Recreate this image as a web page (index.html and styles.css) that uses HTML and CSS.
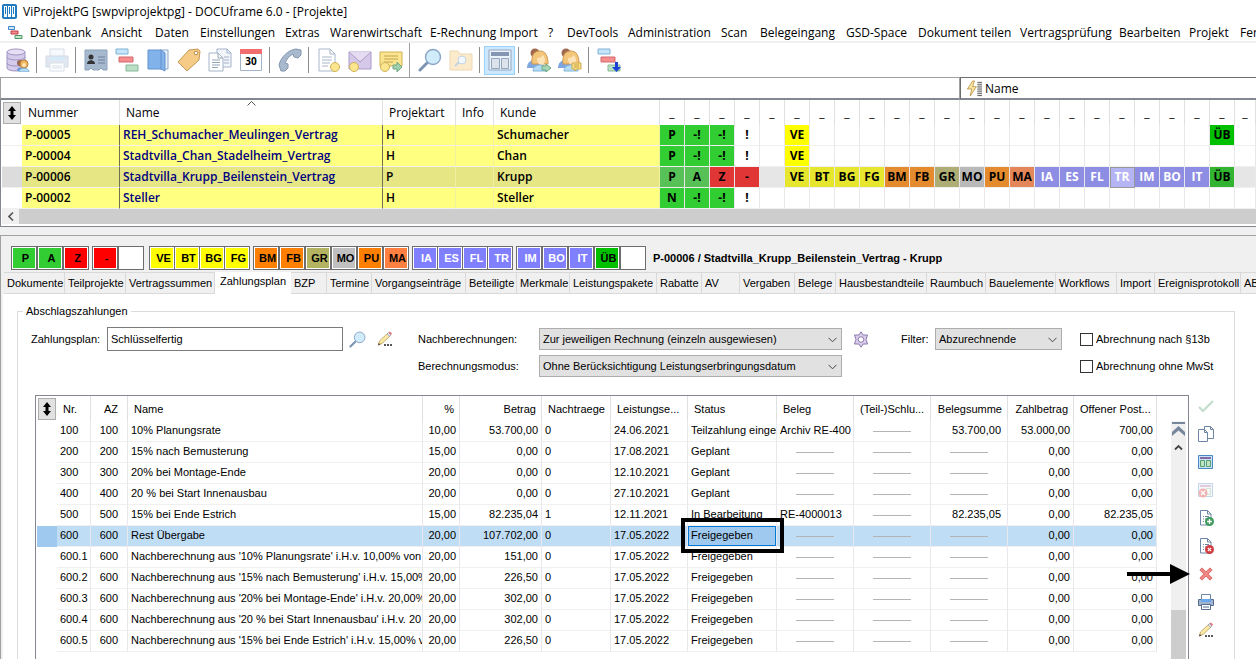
FILE: index.html
```html
<!DOCTYPE html>
<html lang="de">
<head>
  <meta charset="UTF-8" />
  <meta name="viewport" content="width=device-width, initial-scale=1.0"/>
  <title>ViProjektPG [swpviprojektpg] - DOCUframe 6.0 - [Projekte]</title>
  <link rel="stylesheet" href="styles.css">
</head>
<body>

<!-- Shared icon shapes -->
<svg class="defs" width="0" height="0" aria-hidden="true">
  <symbol id="i-gantt" viewBox="0 0 24 24">
    <path d="M1 1h12v5H1z" fill="#c5e6fa" stroke="#7fb2d6"/>
    <path d="M4 9h14v5H4z" fill="#f78d8d" stroke="#cf6a70"/>
    <path d="M11 17h12v6H11z" fill="#b9e0c4" stroke="#86b896"/>
  </symbol>
  <symbol id="i-search" viewBox="0 0 24 24">
    <path d="M2 22l8-8" stroke="#7d94b5" stroke-width="3" stroke-linecap="round"/>
    <circle cx="15" cy="9" r="7.5" fill="#d0ecfb" stroke="#8aa6c6" stroke-width="1.4"/>
  </symbol>
  <symbol id="i-people" viewBox="0 0 24 24">
    <circle cx="8" cy="5" r="4.5" fill="#a0694f"/>
    <path d="M0 20c0-5 3-8 8-8s7 3 7 8z" fill="#7ea6e0"/>
    <path d="M5 16C4 6 8 3 13 3s8 4 8 13z" fill="#f3c67c" stroke="#cf9a50"/>
    <path d="M10 10c4 0 5-2 6-3 1 2 2 3 2 5 0 3-2 5-4 5s-4-3-4-7z" fill="#fde3b8"/>
    <path d="M6 23c0-4 3-6 7-6s7 2 7 6z" fill="#b5dcf5" stroke="#82b4d8"/>
  </symbol>
  <symbol id="i-pencil" viewBox="0 0 16 16">
    <path d="M1.500 13.500l1-3.500L11 2l2.500 2.500L5 12.500z" fill="#fbe9a6" stroke="#b59a55" stroke-width=".8"/>
    <path d="M10 3l1.500-1.500L14 4l-1.500 1.500z" fill="#d5dde8" stroke="#8e9cb0" stroke-width=".6"/>
    <path d="M11.500 1.500L13 .5l2 2L14 4z" fill="#e5727a"/>
    <path d="M.8 14.500l1-2.500 1.700 1.700z" fill="#5a4632"/>
    <path d="M7 14h2M10 14h2M13 14h2" stroke="#222" stroke-width="1.600"/>
  </symbol>
  <symbol id="i-updown" viewBox="0 0 10 16">
    <path d="M5 1l4 5H6.500v4H9l-4 5-4-5h2.500V6H1z" fill="#000"/>
  </symbol>
  <symbol id="i-down" viewBox="0 0 9 6">
    <path d="M.5 .8l4 4 4-4" fill="none" stroke="#444"/>
  </symbol>
</svg>

<div class="app">
  <header class="titlebar">
    <svg width="16" height="16" viewBox="0 0 16 16">
      <rect x="0" y="0" width="15" height="15" rx="2" fill="#1f7bbd"/>
      <path d="M2 2h3v11H2zM6 2h3v11H6zM10 2h3v11h-3z" fill="#fff"/>
      <path d="M3 3h1v7H3zM7 3h1v7H7zM11 3h1v7h-1z" fill="#1f7bbd"/>
    </svg>
    <span>ViProjektPG [swpviprojektpg] - DOCUframe 6.0 - [Projekte]</span>
  </header>

  <nav class="menubar">
    <svg width="15" height="15" viewBox="0 0 15 15">
      <path d="M.5 1.500h6v3h-6z" fill="#cfe8fa" stroke="#3d86c4"/>
      <path d="M3 6h7v3H3z" fill="#f38b8b" stroke="#c23b48"/>
      <path d="M7 10.500h7v3H7z" fill="#c4e6cd" stroke="#4d9563"/>
    </svg>
    <a href="#">Datenbank</a>
    <a href="#">Ansicht</a>
    <a href="#">Daten</a>
    <a href="#">Einstellungen</a>
    <a href="#">Extras</a>
    <a href="#">Warenwirtschaft</a>
    <a href="#">E-Rechnung Import</a>
    <a href="#">?</a>
    <a href="#">DevTools</a>
    <a href="#">Administration</a>
    <a href="#">Scan</a>
    <a href="#">Belegeingang</a>
    <a href="#">GSD-Space</a>
    <a href="#">Dokument teilen</a>
    <a href="#">Vertragsprüfung</a>
    <a href="#">Bearbeiten</a>
    <a href="#">Projekt</a>
    <a href="#">Fenster</a>
  </nav>

  <div class="toolbar">
    <button aria-label="Datenbank"><svg viewBox="0 0 24 24">
      <path d="M1 4v16c0 4 18 4 18 0V4" fill="#d5cbea" stroke="#a195c2"/>
      <ellipse cx="10" cy="4" rx="9" ry="3" fill="#e6def5" stroke="#a195c2"/>
      <path d="M1 9c0 4 18 4 18 0M1 15c0 4 18 4 18 0" fill="none" stroke="#a195c2"/>
      <circle cx="14" cy="15" r="3" fill="#9b6750"/>
      <path d="M11 23c0-5 5-5 6 0z" fill="#6f97d3"/>
      <circle cx="18" cy="16" r="4" fill="#efb65c" stroke="#b98238"/>
      <circle cx="18" cy="17" r="2" fill="#fde3b8"/>
      <path d="M13 24c0-5 10-5 10 0z" fill="#b5dcf5" stroke="#7eaed2"/>
    </svg></button>
    <span class="sep"></span>
    <button aria-label="Drucken"><svg viewBox="0 0 24 24" opacity=".45">
      <path d="M5 1h14v8H5z" fill="#eef3fa" stroke="#a9b9cf"/>
      <path d="M1 8h22v11H1z" fill="#bccbe0" stroke="#9fb1cb"/>
      <path d="M5 9h14v3H5z" fill="#a5d3f5"/>
      <path d="M5 15h14v8H5z" fill="#fff" stroke="#a9b9cf"/>
      <path d="M7 18h10M7 20h10" stroke="#a9b9cf"/>
    </svg></button>
    <span class="sep"></span>
    <button aria-label="Adressen"><svg viewBox="0 0 24 24">
      <path d="M1 2h22v20h-4l-2-2-2 2H9l-2-2-2 2H1z" fill="#a7b9cf" stroke="#8da2bd"/>
      <circle cx="7" cy="9" r="2.500" fill="#333"/>
      <path d="M3 16c0-5 8-5 8 0z" fill="#333"/>
      <path d="M14 9h7M14 12h7M14 15h7" stroke="#6d7f99"/>
    </svg></button>
    <button aria-label="Projekte"><svg><use href="#i-gantt"/></svg></button>
    <button aria-label="Buch"><svg viewBox="0 0 24 24">
      <path d="M14 2h8v19h-8z" fill="#e9f1fa" stroke="#8da7c8"/>
      <path d="M2 2h13l4 3v18l-4-2H2z" fill="#82b2ea" stroke="#6292cd"/>
      <path d="M15 2v19" stroke="#6292cd"/>
    </svg></button>
    <button aria-label="Etikett"><svg viewBox="0 0 24 24">
      <path d="M1 14L12 2l9-1 2 2-1 9-12 11z" fill="#f5cb87" stroke="#c79a55"/>
      <circle cx="19" cy="5" r="1.800" fill="#fff" stroke="#b98d4c"/>
    </svg></button>
    <button aria-label="Dokumente"><svg viewBox="0 0 24 24">
      <path d="M9 1h10l4 4v14H9z" fill="#f2f6fb" stroke="#a3b3c8"/>
      <path d="M19 1v4h4M16 9h5M16 12h5M16 15h5" fill="none" stroke="#a3b3c8"/>
      <path d="M1 5h9l5 5v13H1z" fill="#fff" stroke="#a3b3c8"/>
      <path d="M10 5v5h5M4 12h8M4 14.500h8M4 17h8M4 19.500h6" fill="none" stroke="#93a3b8"/>
    </svg></button>
    <button aria-label="Kalender"><svg viewBox="0 0 24 24">
      <path d="M1.500 1.500h21v21h-21z" fill="#fff" stroke="#a3b3c8"/>
      <path d="M1 1h22v5H1z" fill="#f26d6d"/>
      <text x="12" y="17" text-anchor="middle" class="cal-text">30</text>
    </svg></button>
    <span class="sep"></span>
    <button aria-label="Telefon"><svg viewBox="0 0 24 24">
      <path d="M1 17C3 9 10 2 18 1l5 1v5l-3 3-4-1-1-3c-4 2-6 5-8 9l3 1v4l-3 3H3z" fill="#a9b9cd" stroke="#8497b1"/>
    </svg></button>
    <span class="sep"></span>
    <button aria-label="Neues Dokument"><svg viewBox="0 0 24 24">
      <path d="M2 1h11l5 5v17H2z" fill="#fff" stroke="#a9b7c9"/>
      <path d="M13 1v5h5M5 9h10M5 12h10M5 15h8M5 18h6" fill="none" stroke="#a9b7c9"/>
      <circle cx="18" cy="19" r="4.500" fill="#fbe58f" stroke="#d0b155"/>
    </svg></button>
    <button aria-label="Neue Mail"><svg viewBox="0 0 24 24">
      <path d="M1 4h22v17H1z" fill="#d5c8e8" stroke="#ab9bc8"/>
      <path d="M1 4l11 10L23 4" fill="#e5dcf2" stroke="#ab9bc8"/>
      <circle cx="6" cy="19" r="4.500" fill="#fbe58f" stroke="#d0b155"/>
    </svg></button>
    <button aria-label="Neue Notiz"><svg viewBox="0 0 24 24">
      <path d="M1 4h22v14H1z" fill="#fbe58f" stroke="#d0b155"/>
      <path d="M5 8h14M5 11h14M5 14h9" stroke="#c2a14c"/>
      <circle cx="6" cy="19" r="4.500" fill="#fbe58f" stroke="#d0b155"/>
      <path d="M14 17h4v-3l5 5-5 5v-3h-4z" fill="#9fd0ae" stroke="#74a884"/>
    </svg></button>
    <span class="sep sep-full"></span>
    <button aria-label="Suchen"><svg><use href="#i-search"/></svg></button>
    <button aria-label="Ordner suchen"><svg viewBox="0 0 24 24" opacity=".5">
      <path d="M1 3h8l2 3h12v16H1z" fill="#f9d999" stroke="#ddb068"/>
      <path d="M6 18l4-4" stroke="#8aa6c6" stroke-width="2"/>
      <circle cx="13" cy="12" r="4" fill="#e2f3fd" stroke="#8aa6c6"/>
    </svg></button>
    <span class="sep"></span>
    <button class="active" aria-label="Ansicht"><svg viewBox="0 0 24 24">
      <path d="M1 2h22v20H1z" fill="#eaf2fa" stroke="#93a6bf"/>
      <path d="M3 4h18v4H3z" fill="#8496b1"/>
      <path d="M3.500 10.500h8v10h-8zM13.500 10.500h7v10h-7z" fill="#dde3ea" stroke="#93a6bf"/>
    </svg></button>
    <span class="sep"></span>
    <button aria-label="Personen zuordnen"><svg viewBox="0 0 24 24">
      <use href="#i-people"/>
      <path d="M15 18h4v-2l5 4-5 4v-2h-4z" fill="#a7d8b6" stroke="#6fa780"/>
    </svg></button>
    <button aria-label="Personen Notiz"><svg viewBox="0 0 24 24">
      <use href="#i-people"/>
      <path d="M14 15h9v6h-4l-2 2v-2h-3z" fill="#fbdf82" stroke="#cfa94c"/>
      <path d="M16 17h5M16 19h5" stroke="#b9923a" stroke-width=".8"/>
    </svg></button>
    <span class="sep"></span>
    <button aria-label="Projekt einfügen"><svg viewBox="0 0 24 24">
      <use href="#i-gantt"/>
      <path d="M18 14h3v5h3l-4.500 5L15 19h3z" fill="#1c3fd6"/>
    </svg></button>
  </div>

  <div class="filterbar">
    <input type="text" class="filter-text" aria-label="Suchtext">
    <div class="filter-field">
      <svg width="17" height="17" viewBox="0 0 18 18">
        <path d="M7 1L1.500 9.500H6L4.500 17 11 7H7L9 1z" fill="#fbe3a0" stroke="#b08a3c" stroke-width=".8"/>
        <path d="M12 2.500h5M12 4.500h5M12 6.500h5M12 8.500h5M12 10.500h5M12 12.500h5M12 14.500h5M12 16.500h5" stroke="#555"/>
      </svg>
      <input type="text" value="Name" aria-label="Suchfeld">
    </div>
  </div>

  <!-- Project list -->
  <section class="projects">
    <table class="plist">
      <colgroup>
        <col class="p-head"><col class="p-nr"><col class="p-name"><col class="p-art"><col class="p-info"><col class="p-kunde">
        <col span="23" class="p-st"><col>
      </colgroup>
      <thead>
        <tr>
          <th class="corner"><button class="updown" aria-label="Sortieren"><svg width="10" height="16"><use href="#i-updown"/></svg></button></th>
          <th>Nummer</th>
          <th class="sorted">Name<svg class="caret" width="9" height="5" viewBox="0 0 9 5"><path d="M.5 4.500l4-4 4 4" fill="none" stroke="#555"/></svg></th>
          <th>Projektart</th><th>Info</th><th>Kunde</th>
          <th class="u">_</th><th class="u">_</th><th class="u">_</th><th class="u">_</th><th class="u">_</th><th class="u">_</th><th class="u">_</th><th class="u">_</th>
          <th class="u">_</th><th class="u">_</th><th class="u">_</th><th class="u">_</th><th class="u">_</th><th class="u">_</th><th class="u">_</th><th class="u">_</th>
          <th class="u">_</th><th class="u">_</th><th class="u">_</th><th class="u">_</th><th class="u">_</th><th class="u">_</th><th class="u">_</th><th class="u">_</th>
        </tr>
      </thead>
      <tbody>
        <tr>
          <td></td><td class="y">P-00005</td><td class="y name">REH_Schumacher_Meulingen_Vertrag</td><td class="y">H</td><td class="y"></td><td class="y">Schumacher</td>
          <td class="s green">P</td><td class="s green">-!</td><td class="s green">-!</td><td class="s">!</td><td class="s"></td><td class="s yellow">VE</td>
          <td></td><td></td><td></td><td></td><td></td><td></td><td></td><td></td><td></td><td></td><td></td><td></td><td></td><td></td><td></td><td></td>
          <td class="s ueb">ÜB</td><td></td>
        </tr>
        <tr>
          <td></td><td class="y">P-00004</td><td class="y name">Stadtvilla_Chan_Stadelheim_Vertrag</td><td class="y">H</td><td class="y"></td><td class="y">Chan</td>
          <td class="s green">P</td><td class="s green">-!</td><td class="s green">-!</td><td class="s">!</td><td class="s"></td><td class="s yellow">VE</td>
          <td></td><td></td><td></td><td></td><td></td><td></td><td></td><td></td><td></td><td></td><td></td><td></td><td></td><td></td><td></td><td></td>
          <td></td><td></td>
        </tr>
        <tr class="current">
          <td></td><td class="y">P-00006</td><td class="y name">Stadtvilla_Krupp_Beilenstein_Vertrag</td><td class="y">P</td><td class="y"></td><td class="y">Krupp</td>
          <td class="s green">P</td><td class="s green">A</td><td class="s red">Z</td><td class="s red">-</td><td class="s"></td>
          <td class="s yellow">VE</td><td class="s yellow">BT</td><td class="s yellow">BG</td><td class="s yellow">FG</td>
          <td class="s orange">BM</td><td class="s orange">FB</td><td class="s olive">GR</td><td class="s silver">MO</td><td class="s orange">PU</td><td class="s coral">MA</td>
          <td class="s violet">IA</td><td class="s violet">ES</td><td class="s violet">FL</td><td class="s violet focus">TR</td><td class="s violet">IM</td><td class="s violet">BO</td><td class="s violet">IT</td>
          <td class="s ueb">ÜB</td><td></td>
        </tr>
        <tr>
          <td></td><td class="y">P-00002</td><td class="y name">Steller</td><td class="y">H</td><td class="y"></td><td class="y">Steller</td>
          <td class="s green">N</td><td class="s green">-!</td><td class="s green">-!</td><td class="s">!</td><td class="s"></td><td></td>
          <td></td><td></td><td></td><td></td><td></td><td></td><td></td><td></td><td></td><td></td><td></td><td></td><td></td><td></td><td></td><td></td>
          <td></td><td></td>
        </tr>
      </tbody>
    </table>
    <div class="hscroll">
      <button aria-label="Nach links"><svg width="6" height="9" viewBox="0 0 6 9"><path d="M5 .5l-4 4 4 4" fill="none" stroke="#555" stroke-width="1.600"/></svg></button>
      <div class="hthumb"></div>
    </div>
  </section>

  <!-- Project details -->
  <section class="detail">
    <div class="stages">
      <div class="stage-group">
        <button class="green">P</button><button class="green">A</button><button class="red">Z</button>
      </div>
      <div class="stage-group wide-after">
        <button class="red">-</button><button aria-label="leer"></button>
      </div>
      <div class="stage-group joined">
        <button class="yellow">VE</button><button class="yellow">BT</button><button class="yellow">BG</button><button class="yellow">FG</button>
      </div>
      <div class="stage-group">
        <button class="orange">BM</button><button class="orange">FB</button><button class="olive">GR</button><button class="silver">MO</button><button class="orange">PU</button><button class="coral">MA</button>
      </div>
      <div class="stage-group joined">
        <button class="violet">IA</button><button class="violet">ES</button><button class="violet">FL</button><button class="violet">TR</button>
      </div>
      <div class="stage-group">
        <button class="violet">IM</button><button class="violet">BO</button><button class="violet">IT</button><button class="ueb">ÜB</button><button aria-label="leer"></button>
      </div>
      <strong class="project-title">P-00006 / Stadtvilla_Krupp_Beilenstein_Vertrag - Krupp</strong>
    </div>

    <div class="tabs">
      <button>Dokumente</button>
      <button>Teilprojekte</button>
      <button>Vertragssummen</button>
      <button class="selected">Zahlungsplan</button>
      <button>BZP</button>
      <button>Termine</button>
      <button>Vorgangseinträge</button>
      <button>Beteiligte</button>
      <button>Merkmale</button>
      <button>Leistungspakete</button>
      <button>Rabatte</button>
      <button>AV</button>
      <button>Vergaben</button>
      <button>Belege</button>
      <button>Hausbestandteile</button>
      <button>Raumbuch</button>
      <button>Bauelemente</button>
      <button>Workflows</button>
      <button>Import</button>
      <button>Ereignisprotokoll</button>
      <button>AB</button>
    </div>

    <div class="tab-page">
      <fieldset>
        <legend>Abschlagszahlungen</legend>

        <div class="form">
          <label for="plan">Zahlungsplan:</label>
          <input type="text" id="plan" value="Schlüsselfertig">
          <div class="form-icons">
            <button aria-label="Suchen"><svg width="17" height="17"><use href="#i-search"/></svg></button>
            <button aria-label="Bearbeiten"><svg width="16" height="16"><use href="#i-pencil"/></svg></button>
          </div>
          <label for="nach">Nachberechnungen:</label>
          <div class="select">
            <select id="nach"><option>Zur jeweiligen Rechnung (einzeln ausgewiesen)</option></select>
            <svg width="9" height="6"><use href="#i-down"/></svg>
          </div>
          <div class="form-icons options">
            <button aria-label="Optionen"><svg width="16" height="17" viewBox="0 0 16 17">
              <path d="M8 .8l2.200 3.200h4.300L13 8.500l1.500 4.500h-4.300L8 16.200 5.800 13H1.500L3 8.500 1.500 4h4.300z" fill="#d9cdea" stroke="#8b78ae"/>
              <circle cx="8" cy="8.500" r="2.800" fill="#fff" stroke="#8b78ae"/>
            </svg></button>
          </div>
          <label for="filter">Filter:</label>
          <div class="select">
            <select id="filter"><option>Abzurechnende</option></select>
            <svg width="9" height="6"><use href="#i-down"/></svg>
          </div>
          <label class="check"><input type="checkbox">Abrechnung nach §13b</label>

          <label for="modus" class="second">Berechnungsmodus:</label>
          <div class="select">
            <select id="modus"><option>Ohne Berücksichtigung Leistungserbringungsdatum</option></select>
            <svg width="9" height="6"><use href="#i-down"/></svg>
          </div>
          <label class="check last"><input type="checkbox">Abrechnung ohne MwSt</label>
        </div>

        <div class="plan">
          <div class="grid-frame">
            <table class="grid">
              <colgroup>
                <col class="g-head"><col class="g-nr"><col class="g-az"><col><col class="g-az"><col class="g-betrag"><col class="g-nach">
                <col class="g-beleg"><col class="g-status"><col class="g-beleg"><col class="g-beleg"><col class="g-beleg"><col class="g-zahl"><col class="g-offen">
              </colgroup>
              <thead>
                <tr>
                  <th class="corner"><button class="updown" aria-label="Sortieren"><svg width="10" height="16"><use href="#i-updown"/></svg></button></th>
                  <th>Nr.</th><th class="az">AZ</th><th>Name</th><th class="r">%</th><th class="r">Betrag</th><th>Nachtraege</th><th>Leistungse...</th>
                  <th>Status</th><th>Beleg</th><th>(Teil-)Schlu...</th><th class="r">Belegsumme</th><th class="r">Zahlbetrag</th><th>Offener Post...</th>
                </tr>
              </thead>
              <tbody>
                <tr><td></td><td>100</td><td class="az">100</td><td>10% Planungsrate</td><td class="r">10,00</td><td class="r">53.700,00</td><td>0</td><td>24.06.2021</td><td>Teilzahlung einge</td><td>Archiv RE-400</td><td><hr></td><td class="r sum">53.700,00</td><td class="r">53.000,00</td><td class="r">700,00</td></tr>
                <tr><td></td><td>200</td><td class="az">200</td><td>15% nach Bemusterung</td><td class="r">15,00</td><td class="r">0,00</td><td>0</td><td>17.08.2021</td><td>Geplant</td><td><hr></td><td><hr></td><td><hr></td><td class="r">0,00</td><td class="r">0,00</td></tr>
                <tr><td></td><td>300</td><td class="az">300</td><td>20% bei Montage-Ende</td><td class="r">20,00</td><td class="r">0,00</td><td>0</td><td>12.10.2021</td><td>Geplant</td><td><hr></td><td><hr></td><td><hr></td><td class="r">0,00</td><td class="r">0,00</td></tr>
                <tr><td></td><td>400</td><td class="az">400</td><td>20 % bei Start Innenausbau</td><td class="r">20,00</td><td class="r">0,00</td><td>0</td><td>27.10.2021</td><td>Geplant</td><td><hr></td><td><hr></td><td><hr></td><td class="r">0,00</td><td class="r">0,00</td></tr>
                <tr><td></td><td>500</td><td class="az">500</td><td>15% bei Ende Estrich</td><td class="r">15,00</td><td class="r">82.235,04</td><td>1</td><td>12.11.2021</td><td>In Bearbeitung</td><td>RE-4000013</td><td><hr></td><td class="r sum">82.235,05</td><td class="r">0,00</td><td class="r">82.235,05</td></tr>
                <tr class="current"><td></td><td>600</td><td class="az">600</td><td>Rest Übergabe</td><td class="r">20,00</td><td class="r">107.702,00</td><td>0</td><td>17.05.2022</td><td class="marked"><div>Freigegeben</div></td><td><hr></td><td><hr></td><td><hr></td><td class="r">0,00</td><td class="r">0,00</td></tr>
                <tr><td></td><td>600.1</td><td class="az">600</td><td>Nachberechnung aus '10% Planungsrate' i.H.v. 10,00% von</td><td class="r">20,00</td><td class="r">151,00</td><td>0</td><td>17.05.2022</td><td>Freigegeben</td><td><hr></td><td><hr></td><td><hr></td><td class="r">0,00</td><td class="r">0,00</td></tr>
                <tr><td></td><td>600.2</td><td class="az">600</td><td>Nachberechnung aus '15% nach Bemusterung' i.H.v. 15,00%</td><td class="r">20,00</td><td class="r">226,50</td><td>0</td><td>17.05.2022</td><td>Freigegeben</td><td><hr></td><td><hr></td><td><hr></td><td class="r">0,00</td><td class="r">0,00</td></tr>
                <tr><td></td><td>600.3</td><td class="az">600</td><td>Nachberechnung aus '20% bei Montage-Ende' i.H.v. 20,00%</td><td class="r">20,00</td><td class="r">302,00</td><td>0</td><td>17.05.2022</td><td>Freigegeben</td><td><hr></td><td><hr></td><td><hr></td><td class="r">0,00</td><td class="r">0,00</td></tr>
                <tr><td></td><td>600.4</td><td class="az">600</td><td>Nachberechnung aus '20 % bei Start Innenausbau' i.H.v. 20,</td><td class="r">20,00</td><td class="r">302,00</td><td>0</td><td>17.05.2022</td><td>Freigegeben</td><td><hr></td><td><hr></td><td><hr></td><td class="r">0,00</td><td class="r">0,00</td></tr>
                <tr><td></td><td>600.5</td><td class="az">600</td><td>Nachberechnung aus '15% bei Ende Estrich' i.H.v. 15,00% v</td><td class="r">20,00</td><td class="r">226,50</td><td>0</td><td>17.05.2022</td><td>Freigegeben</td><td><hr></td><td><hr></td><td><hr></td><td class="r">0,00</td><td class="r">0,00</td></tr>
              </tbody>
            </table>
            <div class="vscroll">
              <button aria-label="Zum Anfang"><svg width="15" height="17" viewBox="0 0 15 17"><path d="M1 1h13v2H1zM7.500 5l6.500 6v4L7.500 9.500 1 15v-4z" fill="#76869b"/></svg></button>
              <button class="up" aria-label="Nach oben"><svg width="9" height="7" viewBox="0 0 9 7"><path d="M1 5.500L4.500 2 8 5.500" fill="none" stroke="#444" stroke-width="1.800"/></svg></button>
              <div class="track"></div>
              <div class="vthumb"></div>
            </div>
          </div>

          <div class="actions">
            <button aria-label="Übernehmen"><svg viewBox="0 0 16 16" opacity=".5"><path d="M1 9l4 4L15 3" fill="none" stroke="#86bd97" stroke-width="2.200"/></svg></button>
            <button aria-label="Kopieren"><svg viewBox="0 0 16 16">
              <path d="M6.500 .5h6l3 3v9h-9z" fill="#fff" stroke="#6d86a6"/>
              <path d="M12.500 .5v3h3" fill="none" stroke="#6d86a6"/>
              <path d="M.5 3.500h6l3 3v9h-9z" fill="#fff" stroke="#6d86a6"/>
              <path d="M6.500 3.500v3h3" fill="none" stroke="#6d86a6"/>
            </svg></button>
            <button aria-label="Vorlage"><svg viewBox="0 0 16 16">
              <path d="M.5 1.500h14v13H.5z" fill="#c8e4fa" stroke="#4a86bf"/>
              <path d="M2 3h11v2H2z" fill="#8668a6"/>
              <path d="M2.500 6.500h4v6h-4zM8.500 6.500h4v6h-4z" fill="#bfe3c4" stroke="#57a06a"/>
            </svg></button>
            <button aria-label="Vorlage entfernen"><svg viewBox="0 0 16 16" opacity=".5">
              <path d="M.5 1.500h14v13H.5z" fill="#eaf1f8" stroke="#8bb0d6"/>
              <path d="M2 3h11v2H2z" fill="#c79bb5"/>
              <path d="M8.500 6.500h4v6h-4z" fill="#eef6ee" stroke="#a6c9ac"/>
              <circle cx="5" cy="11" r="4.500" fill="#e56b6b"/>
              <path d="M3 9l4 4M7 9l-4 4" stroke="#fff" stroke-width="1.200"/>
            </svg></button>
            <button aria-label="Position hinzufügen"><svg viewBox="0 0 16 16">
              <path d="M2.500 .5h7l3.500 3.500v11H2.500z" fill="#fff" stroke="#6d86a6"/>
              <path d="M9.500 .5V4H13M5 6.500h1M7 6.500h4M5 9h1M7 9h2M5 11.500h1" fill="none" stroke="#6d86a6"/>
              <circle cx="11.500" cy="11.500" r="4.500" fill="#3f9b5c"/>
              <path d="M11.500 9v5M9 11.500h5" stroke="#fff" stroke-width="1.300"/>
            </svg></button>
            <button aria-label="Position entfernen"><svg viewBox="0 0 16 16">
              <path d="M2.500 .5h7l3.500 3.500v11H2.500z" fill="#fff" stroke="#6d86a6"/>
              <path d="M9.500 .5V4H13M5 6.500h1M7 6.500h4M5 9h1M7 9h2M5 11.500h1" fill="none" stroke="#6d86a6"/>
              <circle cx="11.500" cy="11.500" r="4.500" fill="#cf3b3f"/>
              <path d="M9.800 9.800l3.400 3.400M13.200 9.800l-3.400 3.400" stroke="#fff" stroke-width="1.200"/>
            </svg></button>
            <button class="delete" aria-label="Löschen"><svg viewBox="0 0 16 16">
              <path d="M4 4l8 8M12 4l-8 8" stroke="#d9605f" stroke-width="3.600" stroke-linecap="square"/>
              <path d="M4 4l8 8M12 4l-8 8" stroke="#f08a86" stroke-width="2.200" stroke-linecap="square"/>
            </svg>
            <svg class="arrow" viewBox="0 0 64 20"><path d="M0 8h43V0l20 10-20 10v-8H0z" fill="#000"/></svg></button>
            <button aria-label="Drucken"><svg viewBox="0 0 16 16">
              <path d="M3.500 .5h9v5h-9z" fill="#fff" stroke="#6d86a6"/>
              <path d="M.5 5.500h15v6H.5z" fill="#9fb3cc" stroke="#566f90"/>
              <path d="M3 5h10v3H3z" fill="#69a8ee"/>
              <path d="M3.500 10.500h9v5h-9z" fill="#fff" stroke="#566f90"/>
              <path d="M5 13h6" stroke="#566f90"/>
            </svg></button>
            <button aria-label="Bearbeiten"><svg><use href="#i-pencil"/></svg></button>
          </div>
        </div>
      </fieldset>
    </div>
  </section>
</div>

</body>
</html>
```
FILE: styles.css
```css
* {
  box-sizing: border-box;
}

body {
  margin: 0;
  background: #fff;
  color: #000;
  font-family: "Open Sans", "Noto Sans", sans-serif;
  font-size: 12px;
  overflow: hidden;
}

button {
  font: inherit;
  color: inherit;
  padding: 0;
  border: none;
  background: none;
}

input, select {
  font: inherit;
  color: inherit;
}

svg {
  display: block;
}

.defs {
  position: absolute;
}

.app {
  display: flex;
  flex-direction: column;
  height: 100vh;
}

/* Title and menu */
.titlebar {
  display: flex;
  align-items: center;
  gap: 5px;
  height: 23px;
  padding-left: 2px;
}

.menubar {
  display: grid;
  grid-template-columns: 22px 71px 54px 45px 85px 45px 100px 118px 19px 61px 93px 39px 86px 72px 102px 99px 70px 51px auto;
  align-items: center;
  height: 20px;
  padding-left: 8px;
  border-bottom: 2px solid #f0f0f0;
  white-space: nowrap;
  overflow: hidden;
}

.menubar a {
  color: inherit;
  text-decoration: none;
}

/* Toolbar */
.toolbar {
  display: flex;
  align-items: center;
  height: 34px;
  padding-left: 2px;
}

.toolbar button {
  display: flex;
  align-items: center;
  justify-content: center;
  width: 31px;
  height: 29px;
}

.toolbar svg {
  width: 24px;
  height: 24px;
}

.toolbar .active {
  background: #cce8ff;
  border: 1px solid #99d1ff;
}

.sep {
  width: 1px;
  height: 26px;
  margin: 0 4px 0 3px;
  background: #8c8c8c;
}

.sep-full {
  height: 34px;
  background: #a0a0a0;
}

.cal-text {
  font-size: 10px;
  font-weight: bold;
}

/* Filter bar */
.filterbar {
  display: flex;
  height: 23px;
}

.filter-text {
  flex: 1;
  border: 1px solid #a0a0a0;
  border-bottom: 2px solid #828790;
}

.filter-field {
  display: flex;
  align-items: center;
  gap: 2px;
  width: 296px;
  padding-left: 5px;
  border: 1px solid #6d6d6d;
  border-bottom: 2px solid #828790;
  border-right: none;
}

.filter-field input {
  border: none;
  flex: 1;
  min-width: 0;
  padding: 0;
}

/* Project list */
.projects {
  border: solid #828790;
  border-width: 0 0 1px 1px;
  padding: 0 0 2px 1px;
}

table {
  table-layout: fixed;
  width: 100%;
  border-collapse: separate;
  border-spacing: 0;
}

th, td {
  padding: 0;
  overflow: hidden;
  white-space: nowrap;
  text-align: left;
}

th {
  height: 25px;
  font-weight: normal;
  border-right: 1px solid #e0e0e0;
}

td {
  height: 21px;
  border-right: 1px solid #e8e8ec;
  border-bottom: 1px solid #f0f0f0;
}

th.corner {
  border-right: none;
}

.updown {
  display: flex;
  align-items: center;
  justify-content: center;
  width: 18px;
  height: 22px;
  margin-left: 1px;
  background: #e1e1e1;
  border: 1px solid #adadad;
}

.p-head { width: 20px; }
.p-nr { width: 98px; }
.p-name { width: 263px; }
.p-art { width: 73px; }
.p-info { width: 38px; }
.p-kunde { width: 166px; }
.p-st { width: 25px; }

.plist th {
  padding-left: 6px;
}

.plist th.corner {
  padding-left: 0;
}

.plist th.u {
  padding-left: 0;
  text-align: center;
}

.plist th.sorted {
  position: relative;
}

.caret {
  position: absolute;
  top: 1px;
  left: 127px;
}

.plist td {
  line-height: 20px;
  font-weight: 600;
}

.plist td:first-child {
  border-right: none;
}

.plist .y {
  padding-left: 3px;
  background: #ffff80;
  border-right-color: #f0f0a0;
}

.plist .y:nth-child(2),
.plist .name {
  border-right-color: #707050;
}

.plist .name {
  color: #000080;
}

.plist .s {
  text-align: center;
  font-weight: bold;
}

.plist .current td {
  background: #e6e6e6;
}

.plist .current td:first-child {
  background: #dcdcdc;
}

.plist .current .y { background: #e6e684; }

.green { background: #32cd32; }
.red { background: #ff0000; }
.yellow { background: #ffff00; }
.orange { background: #ff8000; }
.olive { background: #b3b361; }
.silver { background: #c0c0c0; }
.coral { background: #ff8040; }
.violet { background: #8080ff; color: #fff; }
.ueb { background: #00c000; }

.plist .current .green { background: #57c157; }
.plist .current .red { background: #e03636; }
.plist .current .yellow { background: #e6e62e; }
.plist .current .orange { background: #e38b2e; }
.plist .current .olive { background: #adad75; }
.plist .current .silver { background: #b9b9b9; }
.plist .current .coral { background: #e3875b; }
.plist .current .violet { background: #8d8de3; }
.plist .current .ueb { background: #32b432; }

.plist .current .focus {
  background: #b5b5f5;
  outline: 1px solid #999;
  outline-offset: -1px;
}

.hscroll {
  display: flex;
  height: 15px;
}

.hscroll button {
  display: flex;
  align-items: center;
  justify-content: center;
  width: 17px;
  background: #f0f0f0;
}

.hthumb {
  flex: 1;
  background: #cdcdcd;
}

/* Details */
.detail {
  display: flex;
  flex-direction: column;
  flex: 1;
  min-height: 0;
  background: #f0f0f0;
  border: solid #a0a0a0;
  border-width: 1px 0 0 1px;
  box-shadow: 0 -8px 0 #f0f0f0;
  margin-top: 8px;
  padding-left: 2px;
  font-family: "Liberation Sans", Arial, sans-serif;
  font-size: 11px;
}

.stages {
  display: flex;
  align-items: center;
  gap: 3px;
  padding: 10px 0 2px 8px;
}

.stage-group {
  display: flex;
}

.stage-group.wide-after {
  margin-right: 2px;
}

.stage-group button {
  width: 26px;
  height: 24px;
  padding-left: 3px;
  border: 1px solid #6d6d6d;
  box-shadow: inset 0 0 0 1px #fff;
  font-weight: bold;
}

.stage-group button[aria-label] {
  background: #fff;
}

.stage-group.joined button + button {
  margin-left: -1px;
}

.project-title {
  margin-left: 4px;
}

.tabs {
  display: grid;
  grid-template-columns: 61px 61px 89px 76px 36px 45px 94px 51px 53px 87px 45px 38px 55px 41px 91px 59px 70px 61px 38px 86px 60px;
  align-items: end;
  height: 22px;
  padding-left: 1px;
  overflow: hidden;
}

.tabs button {
  height: 22px;
  padding-left: 3px;
  border: 1px solid #d9d9d9;
  border-left: none;
  text-align: left;
  white-space: nowrap;
}

.tabs .selected {
  padding: 0 0 4px 5px;
  background: #fff;
  border: none;
}

.tab-page {
  display: flex;
  flex: 1;
  min-height: 0;
  padding: 11px 21px 0 14px;
  background: #fff;
}

fieldset {
  display: flex;
  flex-direction: column;
  flex: 1;
  min-width: 0;
  margin: 0;
  padding: 11px 0 0 17px;
  border: 1px solid #dcdcdc;
  border-bottom: none;
}

legend {
  margin-left: -12px;
  padding: 0 3px;
}

.form {
  display: grid;
  grid-template-columns: 76px 236px 75px 121px 303px 59px 34px 127px auto;
  grid-auto-rows: 22px;
  row-gap: 5px;
  align-items: center;
  margin-left: -4px;
}

.form #plan {
  height: 24px;
  padding: 0 3px;
  border: 1px solid #7a7a7a;
}

.form label {
  white-space: nowrap;
}

.form .second {
  grid-column: 4;
}

.form .last {
  grid-column: 9;
}

.form-icons {
  display: flex;
  align-items: center;
  gap: 11px;
  padding-left: 6px;
}

.form-icons.options {
  padding-left: 11px;
}

.select {
  position: relative;
}

.select select {
  width: 100%;
  height: 22px;
  padding: 0 20px 0 3px;
  appearance: none;
  background: #e1e1e1;
  border: 1px solid #adadad;
  border-radius: 0;
}

.select svg {
  position: absolute;
  top: 9px;
  right: 5px;
  pointer-events: none;
}

.check {
  display: flex;
  align-items: center;
  gap: 3px;
  padding-left: 18px;
}

.check input {
  width: 13px;
  height: 13px;
  margin: 0;
  appearance: none;
  background: #fff;
  border: 1px solid #333;
}

/* Payment plan grid */
.plan {
  display: flex;
  flex: 1;
  min-height: 0;
  margin-top: 18px;
}

.grid-frame {
  display: flex;
  flex: 1;
  min-width: 0;
  padding: 0 2px 0 1px;
  border: 1px solid #828790;
  border-bottom: none;
}

.grid {
  flex: 1;
  width: 0;
  align-self: flex-start;
}

.g-head { width: 20px; }
.g-nr { width: 34px; }
.g-az { width: 37px; }
.g-betrag { width: 82px; }
.g-nach { width: 69px; }
.g-beleg { width: 77px; }
.g-status { width: 89px; }
.g-zahl { width: 66px; }
.g-offen { width: 83px; }

.grid th {
  padding: 0 5px 0 6px;
}

.grid th.corner {
  padding: 0;
}

.grid td {
  padding: 0 3px 2px;
  line-height: 18px;
}

.grid td:first-child {
  border: none;
}

.grid .r {
  text-align: right;
}

.grid td.sum {
  padding-right: 6px;
}

.grid .az {
  padding-right: 9px;
  text-align: right;
}

.grid hr {
  width: 38px;
  margin: 2px auto 0;
  border: none;
  border-top: 1px solid #b4b4b4;
}

.grid .current td {
  background: #bfddf5;
}

.grid .current td:first-child {
  background: #9fc9ee;
}

.grid .current .marked {
  position: relative;
  padding: 0;
  overflow: visible;
}

.marked div {
  height: 20px;
  padding-left: 2px;
  line-height: 16px;
  background: #9fc9ee;
  border: 1px solid #0078d7;
}

/* Black frame round the released status */
.marked::after {
  content: "";
  position: absolute;
  inset: -8px -8px -7px -7px;
  border: 4px solid #000;
}

.vscroll {
  display: flex;
  flex-direction: column;
  width: 15px;
  margin: 25px 0 0 14px;
  background: #f0f0f0;
}

.vscroll .up {
  padding: 6px 0 6px 3px;
}

.track {
  height: 153px;
}

.vthumb {
  flex: 1;
  background: #cdcdcd;
}

.actions {
  width: 45px;
  margin-top: -3px;
  padding-left: 9px;
}

.actions button {
  display: flex;
  align-items: center;
  width: 16px;
  height: 28px;
}

.actions svg {
  width: 16px;
  height: 16px;
}

.delete {
  position: relative;
}

.actions .arrow {
  position: absolute;
  top: 4px;
  right: 100%;
  width: 64px;
  height: 20px;
  margin-right: 7px;
}
```
